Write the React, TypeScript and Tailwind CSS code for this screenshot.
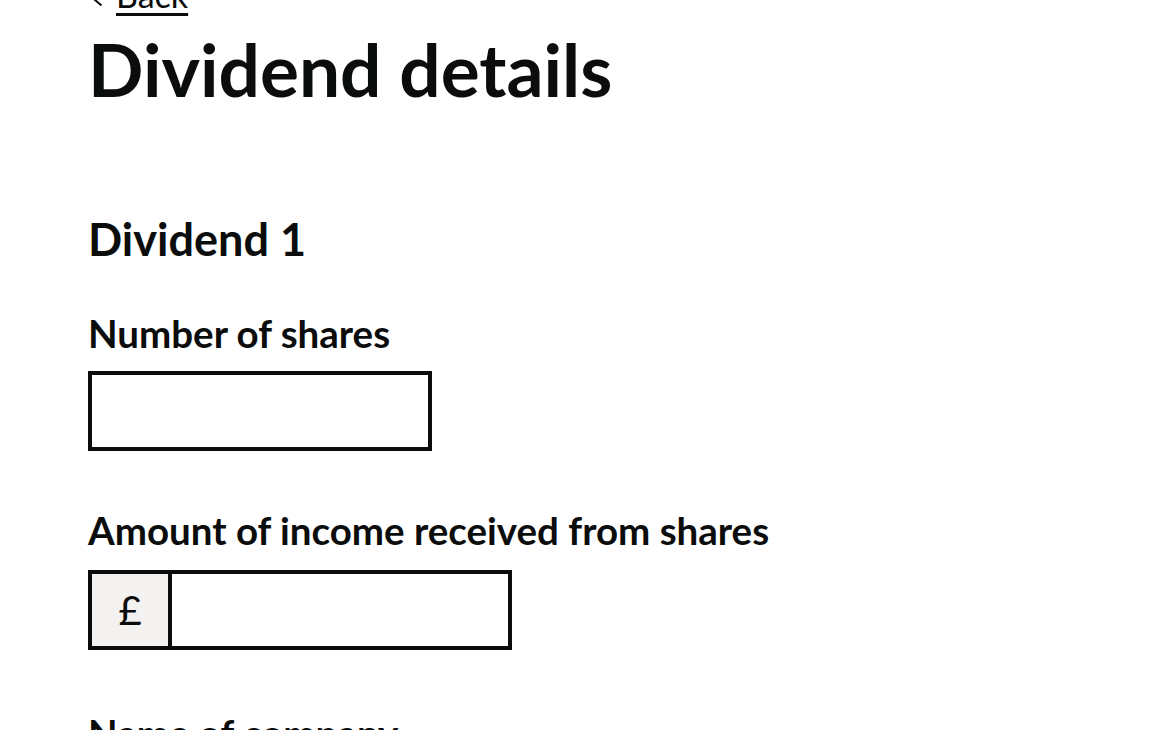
import React from "react";

const FONT = { fontFamily: 'Lato, "Noto Sans", Arial, sans-serif' };

const LABEL = "block text-[38.5px] leading-[44px] font-bold";
const INPUT =
  "block h-[80px] border-[4px] border-[#0b0c0c] rounded-none bg-white px-3 text-[34px] outline-none";

export default function App() {
  return (
    <div className="min-h-screen bg-white text-[#0b0c0c] overflow-hidden" style={FONT}>
      <div className="px-[88px] -mt-[23px]">
        {/* back link, mostly scrolled off */}
        <a
          href="#"
          className="flex items-start h-[36px] text-[34px] leading-[36px] text-[#0b0c0c] underline decoration-[3px] underline-offset-[5px]"
        >
          <svg width="12" height="12" viewBox="0 0 12 12" className="mt-[17px] ml-[4px] mr-[12px] shrink-0">
            <path d="M9.5 0.5 L3 6 L9.5 11.5" fill="none" stroke="#0b0c0c" strokeWidth="2" />
          </svg>
          Back
        </a>
        <h1 className="mt-[16px] text-[73px] leading-[80px] font-bold">Dividend details</h1>
        <h2 className="mt-[105px] text-[45px] leading-[50px] font-bold">Dividend 1</h2>

        <div className="mt-[47px]">
          <label className={LABEL}>Number of shares</label>
          <input className={`${INPUT} mt-[16px] w-[344px]`} />
        </div>

        <div className="mt-[57px]">
          <label className={LABEL}>Amount of income received from shares</label>
          <div className="mt-[18px] flex w-[424px] h-[80px]">
            <div className="w-[84px] h-full shrink-0 bg-[#f3f2f1] border-[4px] border-[#0b0c0c] flex items-center justify-center text-[40px]">
              £
            </div>
            <input className={`${INPUT} -ml-[4px] flex-1 min-w-0`} />
          </div>
        </div>

        <div className="mt-[61px]">
          <label className={LABEL}>Name of company</label>
          <input className={`${INPUT} mt-[16px] w-[600px]`} />
        </div>
      </div>
    </div>
  );
}
